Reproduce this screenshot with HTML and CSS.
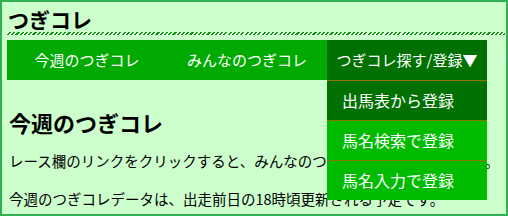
FILE: index.html
```html
<!DOCTYPE html>
<html lang="ja">
<head>
<meta charset="utf-8">
<title>つぎコレ</title>
<link rel="stylesheet" href="styles.css">
</head>
<body>
<div class="page">
  <div class="site-title">つぎコレ</div>
  <div class="hatch"></div>
  <ul class="nav">
    <li class="nav-item">今週のつぎコレ</li>
    <li class="nav-item">みんなのつぎコレ</li>
    <li class="nav-item active">つぎコレ探す/登録▼
      <ul class="dropdown">
        <li class="drop-item current">出馬表から登録</li>
        <li class="drop-item">馬名検索で登録</li>
        <li class="drop-item">馬名入力で登録</li>
      </ul>
    </li>
    <li class="nav-item extra">マイページ</li>
  </ul>
  <h2 class="heading">今週のつぎコレ</h2>
  <p class="text">レース欄のリンクをクリックすると、みんなのつぎコレ一覧を表示します。</p>
  <p class="text">今週のつぎコレデータは、出走前日の18時頃更新される予定です。</p>
</div>
</body>
</html>
```

FILE: styles.css
```css
html, body {
  margin: 0;
  padding: 0;
  background: #ccffcc;
}

.page {
  box-sizing: border-box;
  width: 508px;
  height: 216px;
  border: 2px solid #30b050;
  padding: 5px 1px 0 5px;
  overflow: hidden;
  background: #ccffcc;
  font-family: "Noto Sans CJK JP", "Noto Sans", sans-serif;
  color: #000;
}

.site-title {
  height: 25px;
  font-size: 21px;
  line-height: 24px;
  font-weight: bold;
  padding-left: 1px;
}

.hatch {
  height: 3px;
  background: repeating-linear-gradient(-45deg, #00a000 0 1.5px, #ffffff 1.5px 3px);
}

.nav {
  list-style: none;
  margin: 5px 0 0 0;
  padding: 0;
  width: 480px;
  height: 40px;
  display: flex;
  background: #00aa00;
}

.nav-item {
  flex: 0 0 160px;
  position: relative;
  height: 40px;
  line-height: 40px;
  text-align: center;
  color: #ffffff;
  font-size: 15px;
}

.nav-item.active {
  background: #007000;
}

.nav-item.extra {
  text-align: left;
  padding-left: 16px;
  box-sizing: border-box;
}

.dropdown {
  list-style: none;
  margin: 0;
  padding: 0;
  position: absolute;
  top: 40px;
  left: 0;
  width: 160px;
  z-index: 2;
}

.drop-item {
  border-top: 1px solid #8a7a00;
  height: 39px;
  line-height: 39px;
  padding-left: 15px;
  text-align: left;
  font-size: 16px;
  background: #00bb00;
  color: #ffffff;
}

.drop-item.current {
  background: #007000;
}

.heading {
  margin: 27px 0 0 2px;
  font-size: 22px;
  line-height: 30px;
  font-weight: bold;
}

.text {
  margin: 10px 0 0 2px;
  font-size: 14.5px;
  line-height: 28px;
  white-space: nowrap;
}
```
